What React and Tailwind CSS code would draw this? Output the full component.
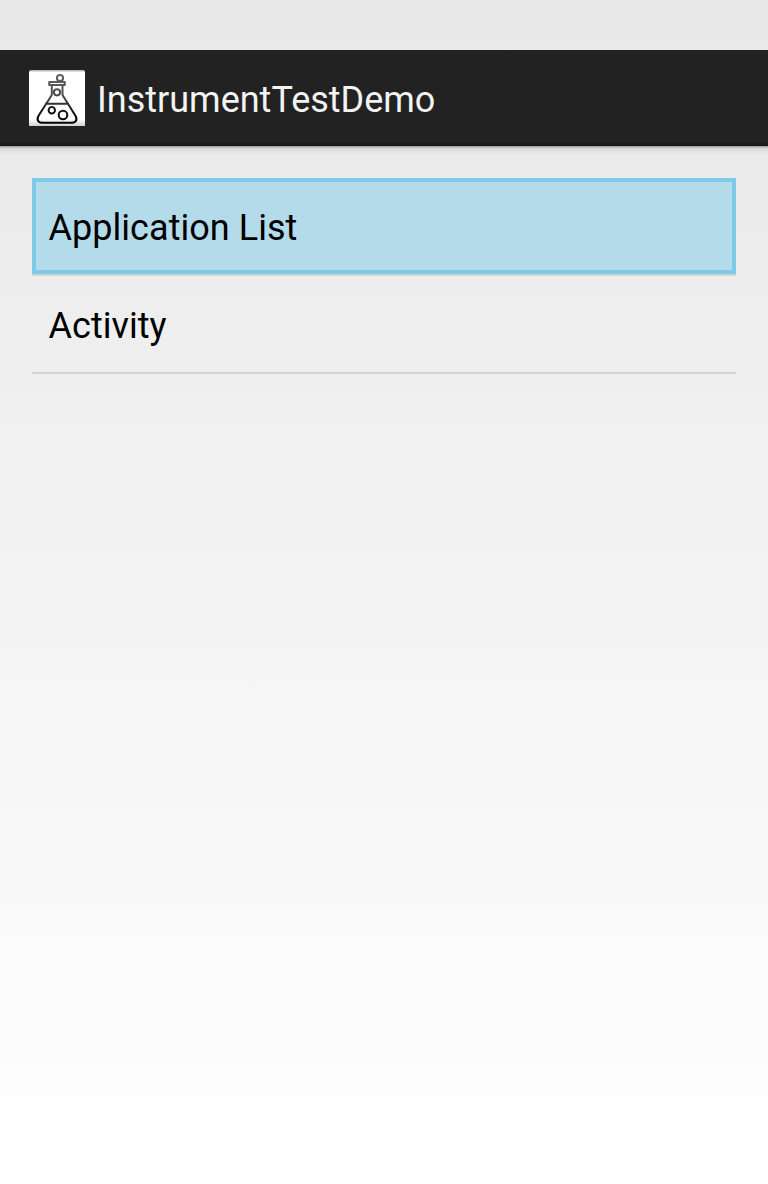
export default function App() {
  return (
    <div className="flex h-[1184px] w-[768px] flex-col overflow-hidden bg-linear-to-b from-[#e8e8e8] to-white pt-[50px] font-['Roboto',sans-serif] text-[36px] leading-[42px]">
      <header className="flex h-24 shrink-0 items-center border-b-3 border-[#1b1a1a] bg-[#222222] pt-[3px] pl-[29px] text-[#f3f3f3]">
        <svg viewBox="0 0 56 56" className="h-14 w-14 rounded-t-[2px]" fill="none" stroke="url(#ink)" strokeWidth="2" strokeLinejoin="round">
          <defs>
            <linearGradient id="ink" gradientUnits="userSpaceOnUse" x1="0" y1="4" x2="0" y2="54">
              <stop offset="0" stopColor="#666" />
              <stop offset="0.5" stopColor="#444" />
              <stop offset="0.75" stopColor="#111" />
              <stop offset="1" stopColor="#000" />
            </linearGradient>
            <linearGradient id="paper" x1="0" y1="0" x2="0" y2="1">
              <stop offset="0" stopColor="#aaa" />
              <stop offset="0.045" stopColor="#fff" />
              <stop offset="0.88" stopColor="#fff" />
              <stop offset="1" stopColor="#d0d0d0" />
            </linearGradient>
          </defs>
          <rect width="56" height="56" fill="url(#paper)" stroke="none" />
          <circle cx="31" cy="8" r="3.1" />
          <rect x="20.2" y="12" width="15.6" height="3" />
          <path d="M22.8 15v10L9.7 45.5c-2.7 4.5-.5 7.3 4.3 7.3h28c4.8 0 7-2.8 4.3-7.3L33.5 25V15M16 33.7h24" />
          <circle cx="28" cy="22.3" r="3.1" />
          <circle cx="22.8" cy="40.3" r="3.2" />
          <circle cx="34" cy="45" r="4.3" />
        </svg>
        <h1 className="ml-3 pt-1 whitespace-nowrap">InstrumentTestDemo</h1>
      </header>
      <div className="h-2 shrink-0 bg-linear-to-b from-black/35 via-black/8 via-30% to-transparent" />
      <ul className="mx-8 mt-6 tracking-[0.04px] text-black">
        <li className="border-b-2 border-[#d3d3d3]">
          <div className="flex h-24 items-center border-4 border-[#7ecae9] bg-[#b4dbea] pt-1 pl-[12.5px]">Application List</div>
        </li>
        <li className="flex h-[98px] items-center border-b-2 border-[#d5d5d5] pt-1 pl-[16.5px]">Activity</li>
      </ul>
    </div>
  );
}
